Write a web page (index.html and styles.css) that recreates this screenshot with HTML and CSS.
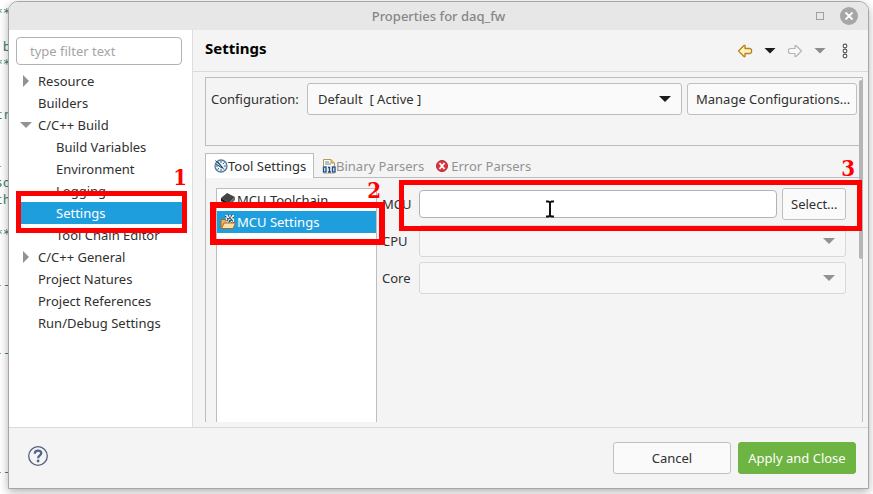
FILE: index.html
```html
<!DOCTYPE html>
<html lang="en">
<head>
<meta charset="utf-8">
<title>Properties for daq_fw</title>
<link rel="stylesheet" href="styles.css">
</head>
<body>
<pre class="editor" aria-hidden="true">**

 b
**


tr


- 
so
th

**


--



--






--</pre>
<div class="dialog" role="dialog" aria-labelledby="title">
  <header class="titlebar">
    <span id="title" class="title">Properties for daq_fw</span>
    <button class="maximize" aria-label="Maximize"></button>
    <button class="close" aria-label="Close">
      <svg width="18" height="18" viewBox="0 0 18 18"><circle cx="9" cy="9" r="9" fill="#a6a6a6"/><path d="M5.500 5.500l7 7M12.500 5.500l-7 7" stroke="#fff" stroke-width="1.800"/></svg>
    </button>
  </header>
  <div class="body">
    <nav class="sidebar">
      <input class="filter" type="text" placeholder="type filter text" aria-label="Filter">
      <ul class="tree">
        <li class="closed">Resource</li>
        <li>Builders</li>
        <li class="open">C/C++ Build</li>
        <li class="child">Build Variables</li>
        <li class="child">Environment</li>
        <li class="child">Logging</li>
        <li class="child selected">Settings<span class="mark mark-one"><b>1</b></span></li>
        <li class="child">Tool Chain Editor</li>
        <li class="closed">C/C++ General</li>
        <li>Project Natures</li>
        <li>Project References</li>
        <li>Run/Debug Settings</li>
      </ul>
    </nav>
    <main class="page">
      <div class="heading">
        <h1>Settings</h1>
        <div class="tools">
          <button aria-label="Back"><svg width="16" height="14" viewBox="0 0 16 14"><path d="M1.500 7L7 1.500H8V4.500H13L14.500 5.500V8.500L13 9.500H8V12.500H7Z" fill="#fff4bd" stroke="#b9801b" stroke-width="1.300" stroke-linejoin="round"/></svg></button>
          <button class="arrow" aria-label="Back history"></button>
          <button aria-label="Forward"><svg width="16" height="14" viewBox="0 0 16 14"><path d="M14.500 7L9 1.500H8V4.500H3L1.500 5.500V8.500L3 9.500H8V12.500H9Z" fill="#f8f8f8" stroke="#b4b4b4" stroke-width="1.200" stroke-linejoin="round"/></svg></button>
          <button class="arrow dim" aria-label="Forward history"></button>
          <button aria-label="View menu"><svg width="16" height="16" viewBox="0 0 16 16" fill="#fff" stroke="#555" stroke-width="1.100"><circle cx="8" cy="3" r="1.900"/><circle cx="8" cy="8" r="1.900"/><circle cx="8" cy="13" r="1.900"/></svg></button>
        </div>
      </div>
      <div class="content">
        <section class="config">
          <label for="config">Configuration:</label>
          <span class="combo"><select id="config"><option>Default&nbsp; [ Active ]</option></select></span>
          <button class="button">Manage Configurations...</button>
        </section>
        <div class="tabs" role="tablist">
          <button class="tab active" role="tab"><svg width="14" height="14" viewBox="0 0 14 14"><circle cx="7" cy="7" r="6" fill="#e7f2fa" stroke="#527b9c" stroke-width="1.300"/><path d="M7 2v2M7 10v2M10 7h2M2 7h2M10.500 3.500l-1.500 1.500M3.500 10.500l1.500-1.500" stroke="#39688d"/><path d="M1.500 1.500l8.500 9M4 3l5 6M2 5l6 4" stroke="#214763"/></svg>Tool Settings</button>
          <button class="tab" role="tab"><svg width="14" height="16" viewBox="0 0 14 16"><path d="M1.500 15V1.500H9L12.500 5V15Z" fill="#fffbe8" stroke="#b49a5a"/><path d="M9 1.500V5h3.500" fill="#e6c66d" stroke="#b49a5a"/><path d="M3 4h4M3 6h6" stroke="#6188b9"/><rect x="1" y="8" width="13" height="7" fill="#e8eef6"/><g fill="none" stroke="#254a7c" stroke-width="1.300"><rect x="1.500" y="9" width="2.500" height="5"/><path d="M6 9.500h1.500V14M6 14h3"/><rect x="10.500" y="9" width="2.500" height="5"/></g></svg>Binary Parsers</button>
          <button class="tab error" role="tab"><svg width="12" height="12" viewBox="0 0 12 12"><circle cx="6" cy="6" r="5.500" fill="#d63543" stroke="#bf2635"/><path d="M3.500 3l5 6M8.500 3l-5 6" stroke="#fff" stroke-width="1.800"/></svg>Error Parsers</button>
        </div>
        <section class="panel">
          <ul class="list">
            <li><svg width="16" height="16" viewBox="0 0 16 16"><path d="M1 6L7 1L15 5L9 11Z" fill="#444"/><path d="M1 6L9 11V14L1 9Z" fill="#181818"/><path d="M9 11L15 5V8L9 14Z" fill="#666"/><path d="M2 9v2M4 11v2M6 12v2M11 12v2M13 10v2" stroke="#777"/></svg>MCU Toolchain</li>
            <li class="selected"><svg width="16" height="16" viewBox="0 0 16 16"><path d="M1 14V5.500H5L6 7H13V14Z" fill="#e7b45a" stroke="#a66a20"/><path d="M5 1h9v9H7z" fill="#edf5fa"/><path d="M5 2l8 8M8 1l6 8M12 1L6 8M14 3L8 9" stroke="#354d63" stroke-width="1.200" stroke-dasharray="2 1"/><path d="M1.500 14.500L4 9H15.500L13 14.500Z" fill="#ffe0a0" stroke="#a66a20"/></svg>MCU Settings<span class="mark mark-two"><b>2</b></span></li>
          </ul>
          <form class="form">
            <div class="row">
              <label for="mcu">MCU</label>
              <input id="mcu" type="text">
              <button class="button" type="button">Select...</button>
              <span class="mark mark-three"><b>3</b></span>
              <svg class="cursor" width="10" height="18" viewBox="0 0 10 18"><path d="M1 1.500H3.500L5 2.500L6.500 1.500H9M5 2.500V15.500M1 16.500H3.500L5 15.500L6.500 16.500H9" fill="none" stroke="#111" stroke-width="2"/></svg>
            </div>
            <div class="row"><label for="cpu">CPU</label><span class="combo"><select id="cpu" disabled></select></span></div>
            <div class="row"><label for="core">Core</label><span class="combo"><select id="core" disabled></select></span></div>
          </form>
        </section>
        <div class="scrollbar"></div>
      </div>
    </main>
  </div>
  <footer class="footer">
    <button class="help" aria-label="Help"><svg width="20" height="20" viewBox="0 0 20 20"><circle cx="10" cy="10" r="9.300" fill="#f4f4f4" stroke="#53617d" stroke-width="1.300"/><path d="M6.800 7.800C6.800 3.500 13.300 3.800 13.300 7.300C13.300 9.400 10.100 9.500 10.100 12.200" fill="none" stroke="#53648c" stroke-width="2.300"/><circle cx="10.100" cy="15" r="1.400" fill="#53648c"/></svg></button>
    <button class="button wide">Cancel</button>
    <button class="button wide primary">Apply and Close</button>
  </footer>
</div>
</body>
</html>
```
FILE: styles.css
```css
* { box-sizing: border-box; }
body {
  margin: 0;
  height: 100vh;
  padding: 1px 4px 5px 8px;
  display: flex;
  overflow: hidden;
  background: #fff;
  color: #303030;
  font: 13px/22px "Noto Sans", sans-serif;
}
button, input, select { font: inherit; color: inherit; margin: 0; }
button { padding: 0; border: 0; background: none; }
ul { list-style: none; margin: 0; padding: 0; }
svg { display: block; flex: none; }

.editor {
  position: absolute;
  top: 4px;
  left: -5px;
  margin: 0;
  color: #3f7f6f;
  font: 13px/17px "DejaVu Sans Mono", monospace;
}

.dialog {
  position: relative;
  flex: 1;
  min-width: 0;
  display: flex;
  flex-direction: column;
  border: 1px solid #a6a6a6;
  border-radius: 10px 10px 0 0;
  background: #f4f4f4;
  box-shadow: 0 3px 10px rgba(0, 0, 0, 0.3);
}
.titlebar {
  flex: none;
  display: flex;
  align-items: center;
  gap: 16px;
  height: 28px;
  padding: 0 10px;
  border-radius: 9px 9px 0 0;
  background: #e7e7e7;
  color: #868686;
}
.title { flex: 1; padding-left: 58px; text-align: center; font-weight: 500; }
.maximize { width: 8px; height: 8px; border: 1px solid #a0a0a0; }

.body { flex: 1; min-height: 0; display: flex; border-bottom: 1px solid #dadada; }
.sidebar {
  flex: none;
  width: 184px;
  padding: 7px 10px 0 7px;
  background: #fff;
  border-right: 1px solid #dedede;
}
.filter {
  display: block;
  width: 100%;
  height: 28px;
  padding: 0 13px;
  border: 1px solid #b2b2b2;
  border-radius: 4px;
  background: #fff;
}
.filter::placeholder { color: #a5a5a5; }
.tree { margin-top: 5px; }
.tree li { position: relative; height: 22px; padding-left: 22px; white-space: nowrap; }
.tree .child { padding-left: 40px; }
.tree .closed::before, .tree .open::before { content: ""; position: absolute; background: #929292; }
.tree .closed::before { left: 7px; top: 5px; width: 6px; height: 12px; clip-path: polygon(0 0, 100% 50%, 0 100%); }
.tree .open::before { left: 4px; top: 8px; width: 12px; height: 6px; clip-path: polygon(0 0, 100% 0, 50% 100%); }
.tree .selected, .list .selected { background: #1f9ede; color: #fff; }

.page { flex: 1; min-width: 0; display: flex; flex-direction: column; }
.heading {
  flex: none;
  display: flex;
  align-items: center;
  justify-content: space-between;
  height: 42px;
  padding: 0 15px 0 12px;
  border-bottom: 1px solid #dadada;
}
h1 { margin: 0; padding-bottom: 6px; color: #000; font-size: 15px; line-height: 20px; }
.tools { display: flex; align-items: center; gap: 11px; }
.arrow { width: 12px; height: 6px; background: #1c1c1c; clip-path: polygon(0 0, 100% 0, 50% 100%); }
.arrow.dim { background: #8d8d8d; }

.content {
  position: relative;
  flex: 1;
  min-height: 0;
  display: flex;
  flex-direction: column;
  margin: 5px 5px 5px 12px;
}
.config {
  flex: none;
  display: flex;
  align-items: flex-start;
  gap: 5px;
  height: 69px;
  padding: 5px;
  border: 1px solid #bdbdbd;
}
.config label { width: 91px; line-height: 32px; white-space: nowrap; }
.combo { position: relative; flex: 1; min-width: 0; display: flex; }
.combo::after {
  content: "";
  position: absolute;
  right: 11px;
  top: 13px;
  width: 12px;
  height: 6px;
  background: #1c1c1c;
  clip-path: polygon(0 0, 100% 0, 50% 100%);
  pointer-events: none;
}
select {
  appearance: none;
  width: 100%;
  height: 32px;
  padding: 0 10px;
  border: 1px solid #bdbdbd;
  border-radius: 3px;
  background: #fafafa;
}
select:disabled { border-color: #d8d8d8; background: #f7f7f7; opacity: 1; }
.combo:has(:disabled)::after { background: #929292; }
.button {
  flex: none;
  height: 32px;
  padding: 0 8px;
  border: 1px solid #c0c0c0;
  border-radius: 3px;
  background: #fafafa;
  white-space: nowrap;
}
.config .button { width: 170px; }

.tabs {
  flex: none;
  display: flex;
  height: 32px;
  padding-top: 7px;
  border-bottom: 1px solid #bdbdbd;
}
.tab { display: flex; align-items: center; gap: 0; height: 25px; padding: 0 8px; color: #929292; white-space: nowrap; }
.tab.active {
  width: 109px;
  border: 1px solid #bdbdbd;
  border-bottom: 0;
  background: #fff;
  color: #303030;
}
.tab.error { gap: 3px; padding-left: 4px; }
.panel { flex: 1; min-height: 0; display: flex; gap: 5px; padding: 10px 16px 0 10px; border: solid #bdbdbd; border-width: 0 1px; }
.list { flex: none; width: 161px; border: 1px solid #bdbdbd; border-bottom: 0; background: #fff; }
.list li { position: relative; display: flex; align-items: center; gap: 1px; height: 22px; padding-left: 3px; }
.form { flex: 1; min-width: 0; display: flex; flex-direction: column; gap: 5px; }
.row { position: relative; display: flex; align-items: center; gap: 5px; height: 32px; }
.row label { width: 32px; }
.row input { flex: 1; min-width: 0; height: 28px; border: 1px solid #b2b2b2; border-radius: 4px; background: #fff; }
.row .button { width: 64px; }
.cursor { position: absolute; left: 163px; top: 12px; }
.scrollbar { position: absolute; right: 0; top: 3px; width: 4px; height: 179px; border-radius: 2px; background: #b5b5b5; }

.mark { position: absolute; z-index: 2; border: 5px solid #f00; pointer-events: none; }
.mark b { position: absolute; color: #f00; font: bold 22px/22px "DejaVu Serif Condensed", "DejaVu Serif", serif; }
.mark-one { inset: -11px -5px -9px 0; }
.mark-one b { right: -5px; top: -30px; }
.mark-two { inset: -9px -9px -12px -7px; border-width: 6px; }
.mark-two b { right: -2px; top: -29px; }
.mark-three { inset: -8px -16px -11px 17px; }
.mark-three b { right: 2px; top: -28px; }

.footer { flex: none; display: flex; align-items: center; gap: 7px; height: 60px; padding: 0 12px 0 19px; }
.help { margin-right: auto; margin-bottom: 4px; }
.wide { width: 118px; }
.primary { border-color: #6db442; background: #6db442; color: #fff; }
```
